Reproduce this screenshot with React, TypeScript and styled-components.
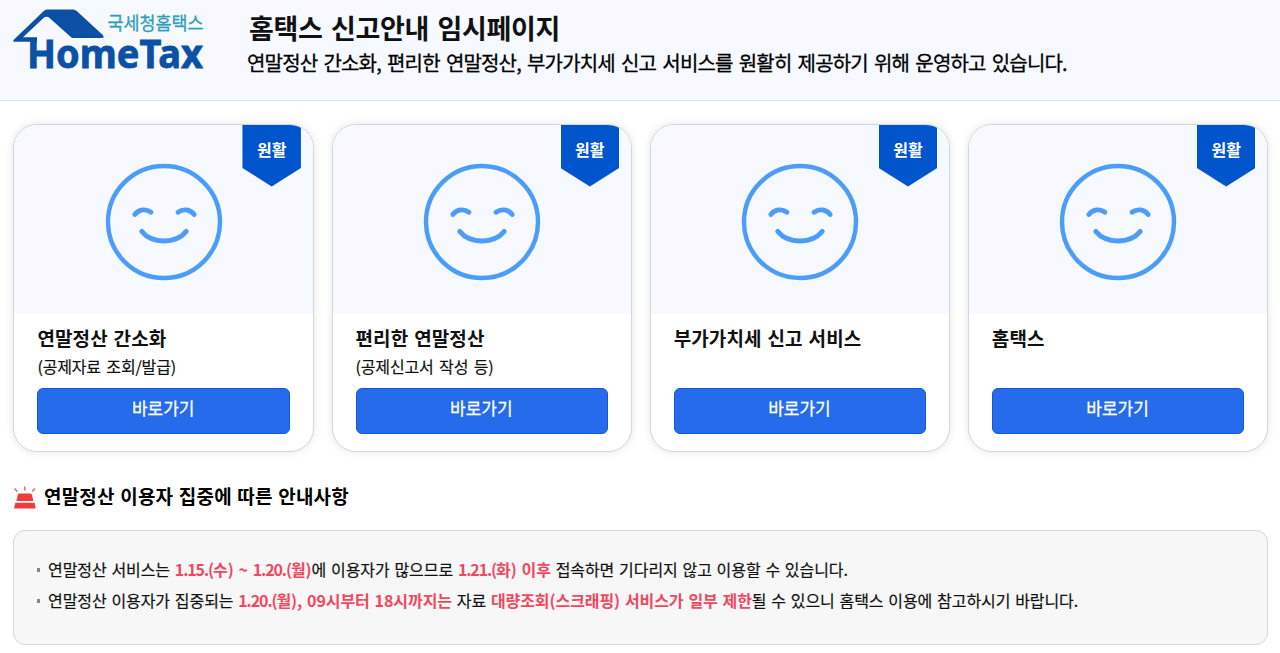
import React from 'react';
import styled, { createGlobalStyle } from 'styled-components';

const colors = {
  primary: '#256bec',
  primaryDark: '#0d5ad8',
  badge: '#0055cd',
  face: '#4c9dfa',
  pale: '#f6f9ff',
  line: '#d6d6d6',
  red: '#f2475f',
  ink: '#111111',
};

type Service = {
  title: string;
  note?: string;
};

const services: Service[] = [
  { title: '연말정산 간소화', note: '(공제자료 조회/발급)' },
  { title: '편리한 연말정산', note: '(공제신고서 작성 등)' },
  { title: '부가가치세 신고 서비스' },
  { title: '홈택스' },
];

const Logo = () => (
  <LogoSvg viewBox="0 0 200 84" role="img" aria-label="국세청홈택스 HomeTax">
    <path
      d="M0.8 35.8 L30.5 7.2 Q32 5.6 34 5.6 H60 Q62 5.6 64 7.2 L90 31.3 Q91.5 34 89 34 H59 L36.5 14 Q33.5 11.5 30.5 14 L10 33.2 H24 V37.8 H1 Q-0.4 37.5 0.8 35.8 Z"
      fill="#0b50a5"
    />
    <LogoKorean x="94.5" y="26" textLength="96" lengthAdjust="spacingAndGlyphs">
      국세청홈택스
    </LogoKorean>
    <LogoLatin x="14" y="63.7" textLength="176" lengthAdjust="spacingAndGlyphs">
      HomeTax
    </LogoLatin>
  </LogoSvg>
);

const Smile = () => (
  <svg width="118" height="118" viewBox="0 0 118 118" fill="none" stroke={colors.face} strokeLinecap="round">
    <circle cx="59" cy="59" r="56" strokeWidth="4.4" />
    <path d="M29.8 51.5 C34 46 41 45.5 46 49.2" strokeWidth="4.8" />
    <path d="M73 49.2 C78 45.5 85 46 89.2 51.5" strokeWidth="4.8" />
    <path d="M36.8 68.5 C47 81 71 81 81.2 68.5" strokeWidth="5" />
  </svg>
);

const Siren = () => (
  <svg width="24" height="24" viewBox="0 0 24 24">
    <path d="M1.5 3.5 L4.3 6.5 M11.8 1.5 V5.5 M22 3.5 L19.2 6.5" stroke="#f5626a" strokeWidth="1.5" />
    <path d="M6.2 8.5 H17.6 Q18.5 8.5 18.8 9.5 L20.4 16 H3.4 L5 9.5 Q5.3 8.5 6.2 8.5 Z" fill="#f23b3b" />
    <path d="M2.3 17.8 H21.5 L22.8 23.4 H1 Z" fill="#f23b3b" />
  </svg>
);

const ServiceCard = ({ title, note }: Service) => (
  <Card>
    <CardVisual>
      <Smile />
      <Badge>원활</Badge>
    </CardVisual>
    <CardBody>
      <CardTitle>{title}</CardTitle>
      <CardNote>{note}</CardNote>
      <GoButton type="button">바로가기</GoButton>
    </CardBody>
  </Card>
);

const App = () => {
  return (
    <>
      <GlobalStyle />
      <Header>
        <Logo />
        <HeaderText>
          <PageTitle>홈택스 신고안내 임시페이지</PageTitle>
          <PageLead>
            연말정산 간소화, 편리한 연말정산, 부가가치세 신고 서비스를 원활히 제공하기 위해 운영하고 있습니다.
          </PageLead>
        </HeaderText>
      </Header>
      <Main>
        <CardGrid>
          {services.map((service) => (
            <ServiceCard key={service.title} {...service} />
          ))}
        </CardGrid>
        <NoticeHeading>
          <Siren />
          <NoticeTitle>연말정산 이용자 집중에 따른 안내사항</NoticeTitle>
        </NoticeHeading>
        <NoticeList>
          <NoticeItem>
            연말정산 서비스는{' '}
            <Mark>
              <DateText>1.15.(</DateText>수) ~ <DateText>1.20.(</DateText>월)
            </Mark>
            에 이용자가 많으므로{' '}
            <Mark>
              <DateText>1.21.(</DateText>화) 이후
            </Mark>{' '}
            접속하면 기다리지 않고 이용할 수 있습니다.
          </NoticeItem>
          <NoticeItem>
            연말정산 이용자가 집중되는{' '}
            <Mark>
              <DateText>1.20.(</DateText>월), 09시부터 18시까지는
            </Mark>{' '}
            자료 <Mark>대량조회(스크래핑) 서비스가 일부 제한</Mark>될 수 있으니 홈택스 이용에 참고하시기 바랍니다.
          </NoticeItem>
        </NoticeList>
      </Main>
    </>
  );
};

export default App;

const GlobalStyle = createGlobalStyle`
  * {
    box-sizing: border-box;
  }
  body {
    margin: 0;
    background: #fff;
    color: ${colors.ink};
    font-family: 'Noto Sans CJK KR', sans-serif;
    overflow: hidden;
  }
  h1, h2, h3, p, ul {
    margin: 0;
    padding: 0;
    white-space: nowrap;
  }
`;

const Header = styled.header`
  display: flex;
  height: 101px;
  padding: 4px 0 0 13px;
  background: ${colors.pale};
  border-bottom: 1px solid #dbe1ea;
`;

const LogoSvg = styled.svg`
  width: 200px;
  height: 84px;
  flex: none;
`;

const LogoKorean = styled.text`
  font-size: 18.5px;
  fill: #2f9fb9;
  stroke: #2f9fb9;
  stroke-width: 0.3px;
`;

const LogoLatin = styled.text`
  font-family: 'Noto Sans', sans-serif;
  font-size: 39px;
  font-weight: 700;
  fill: #0b50a5;
  stroke: #0b50a5;
  stroke-width: 0.8px;
`;

const HeaderText = styled.div`
  padding: 4px 0 0 34px;
`;

const PageTitle = styled.h1`
  padding-left: 2px;
  font-size: 27px;
  line-height: 40px;
  font-weight: 700;
  letter-spacing: -0.3px;
  word-spacing: 2.5px;
`;

const PageLead = styled.p`
  font-size: 20px;
  line-height: 30px;
  letter-spacing: -0.83px;
  word-spacing: 2.5px;
  color: #000;
  -webkit-text-stroke: 0.3px;
`;

const Main = styled.main`
  padding: 23px 12px 0 13px;
`;

const CardGrid = styled.section`
  display: grid;
  grid-template-columns: repeat(4, 1fr);
  column-gap: 17.6px;
  margin: 0 -0.4px 0 0.4px;
`;

const Card = styled.article`
  height: 328px;
  border: 1px solid ${colors.line};
  border-radius: 24px;
  overflow: hidden;
  background: #fff;
  box-shadow: 0 0 8px rgba(0, 0, 0, 0.1);
`;

const CardVisual = styled.div`
  position: relative;
  display: flex;
  justify-content: center;
  height: 189px;
  padding-top: 38px;
  background: ${colors.pale};
`;

const Badge = styled.span`
  position: absolute;
  top: 0;
  right: 12px;
  width: 58.5px;
  height: 61.5px;
  background: ${colors.badge};
  clip-path: polygon(0 0, 100% 0, 100% 70%, 50% 100%, 0 70%);
  color: #fff;
  font-size: 16px;
  line-height: 48px;
  font-weight: 700;
  text-align: center;
`;

const CardBody = styled.div`
  display: flex;
  flex-direction: column;
  padding: 10px 23px 0;
`;

const CardTitle = styled.h2`
  font-size: 19px;
  line-height: 28px;
  font-weight: 700;
  letter-spacing: 0.1px;
  word-spacing: 1.5px;
`;

const CardNote = styled.p`
  height: 36px;
  font-size: 16px;
  line-height: 28px;
  letter-spacing: -0.15px;
  word-spacing: 2px;
  -webkit-text-stroke: 0.2px;
`;

const GoButton = styled.button`
  height: 46px;
  padding: 0 1px 7px 0;
  border: 1px solid ${colors.primaryDark};
  border-radius: 6px;
  background: ${colors.primary};
  color: #fff;
  font-family: inherit;
  font-size: 17px;
  -webkit-text-stroke: 0.3px;
`;

const NoticeHeading = styled.div`
  display: flex;
  align-items: center;
  gap: 7px;
  margin-top: 30px;
  height: 30px;
`;

const NoticeTitle = styled.h3`
  padding-bottom: 2px;
  font-size: 19px;
  line-height: 28px;
  font-weight: 700;
  letter-spacing: 0.2px;
  word-spacing: 1px;
  color: #000;
`;

const NoticeList = styled.ul`
  height: 115px;
  margin-top: 18px;
  padding: 23px 23px 0;
  border: 1px solid ${colors.line};
  border-radius: 12px;
  background: #f7f7f7;
  list-style: none;
`;

const NoticeItem = styled.li`
  font-size: 16px;
  line-height: 31px;
  letter-spacing: -0.07px;
  word-spacing: 1.3px;
  -webkit-text-stroke: 0.2px;
  &::before {
    content: '';
    display: inline-block;
    width: 3px;
    height: 4px;
    margin-right: 8px;
    vertical-align: 4px;
    background: #858585;
  }
`;

const Mark = styled.strong`
  color: ${colors.red};
  font-weight: 700;
  -webkit-text-stroke: 0;
`;

const DateText = styled.span`
  letter-spacing: -1.1px;
`;
